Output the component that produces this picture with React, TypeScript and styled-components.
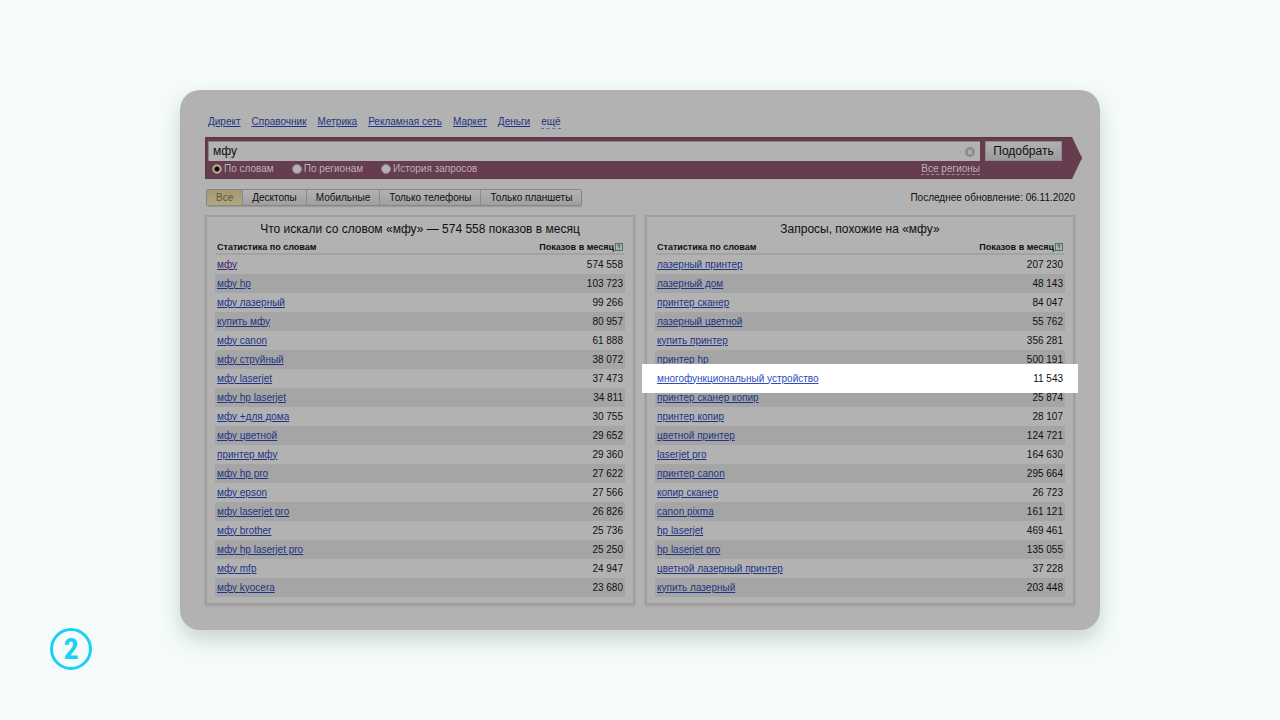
import React from "react";
import styled, { createGlobalStyle, css } from "styled-components";

const GlobalStyle = createGlobalStyle`
  *, *::before, *::after { box-sizing: border-box; }
  body {
    margin: 0;
    background: #f5fbfb;
    color: #101010;
    font-family: "Liberation Sans", Arial, sans-serif;
    font-size: 10px;
    line-height: 12px;
  }
  button, input { font-family: inherit; }
`;

const Slide = styled.div`
  display: grid;
  grid-template-columns: 180px minmax(0, 1fr) 180px;
  align-items: start;
  min-height: 100vh;
  padding: 90px 0 50px;
`;

const SlideNumber = styled.div`
  align-self: end;
  display: flex;
  align-items: center;
  justify-content: center;
  width: 42px;
  height: 42px;
  margin-left: 50px;
  border: 3px solid #19d1f3;
  border-radius: 50%;
  color: #19d1f3;
  font-family: "Roboto Condensed", "Open Sans Condensed", Roboto, sans-serif;
  font-size: 30px;
  line-height: 36px;
  font-weight: 700;
`;

const Card = styled.main`
  margin-bottom: 40px;
  padding: 26px 25px 25px;
  border-radius: 20px;
  background: #b2b2b2;
  box-shadow: 0 10px 20px rgba(30, 50, 50, 0.2);
`;

const Services = styled.nav`
  display: flex;
  gap: 11px;
  height: 21px;
  padding-left: 3px;
`;

const Link = styled.a<{ $visited?: boolean; $dashed?: boolean }>`
  color: ${(p) => (p.$visited ? "#44246a" : "#1f3484")};
  text-decoration: underline;
  text-underline-offset: 1px;
  ${(p) =>
    p.$dashed &&
    css`
      align-self: flex-start;
      border-bottom: 1px dashed #5f6c9a;
      text-decoration: none;
    `}
`;

const SearchBar = styled.form`
  display: grid;
  grid-template-columns: minmax(0, 1fr) 77px;
  column-gap: 5px;
  margin-right: -7px;
  padding: 3px 19px 1px 2px;
  border: 1px solid #5b3448;
  background: #663c4f;
  clip-path: polygon(0 0, calc(100% - 10px) 0, 100% 50%, calc(100% - 10px) 100%, 0 100%);
`;

const Field = styled.div`
  display: flex;
  align-items: center;
  height: 20px;
  padding: 0 5px 0 4px;
  border-top: 1px solid #858585;
  border-left: 1px solid #858585;
  background: #b2b2b2;
`;

const SearchInput = styled.input`
  flex: 1;
  min-width: 0;
  height: 18px;
  padding: 0 0 1px;
  border: 0;
  outline: 0;
  background: transparent;
  color: #101010;
  font-size: 12px;
  line-height: 16px;
`;

const ClearButton = styled.button`
  display: flex;
  padding: 0;
  border: 0;
  background: none;
`;

const SubmitButton = styled.button`
  height: 20px;
  padding: 0;
  border: 1px solid #8c8c8c;
  background: linear-gradient(#b2b2b2, #9b9b9b);
  color: #101010;
  font-size: 12px;
  line-height: 18px;
`;

const Options = styled.div`
  display: flex;
  align-items: center;
  height: 16px;
  padding-left: 4px;
  color: #b9b2b5;
`;

const Option = styled.label`
  display: flex;
  align-items: center;
  gap: 2px;
  margin-right: 18px;
`;

const Radio = styled.input`
  appearance: none;
  width: 10px;
  height: 10px;
  margin: 0;
  border: 1px solid #8d858a;
  border-radius: 50%;
  background: #b2b2b2;
  &:checked {
    border-color: #9c9272;
    background: radial-gradient(#050505 0 2px, #b8ad8a 3px);
  }
`;

const RegionLink = styled.a`
  margin-left: auto;
  border-bottom: 1px dashed #a0929a;
  color: #b9b2b5;
  line-height: 11px;
  text-decoration: none;
`;

const Toolbar = styled.div`
  display: flex;
  align-items: center;
  justify-content: space-between;
  margin-top: 10px;
  padding-left: 1px;
`;

const Tabs = styled.div`
  display: flex;
  border: 1px solid #868686;
  border-radius: 2px;
  box-shadow: 0 1px 1px #999999;
`;

const Tab = styled.button<{ $active?: boolean }>`
  height: 15px;
  padding: 0 9px;
  border: 0;
  border-right: 1px solid #8a8a8a;
  background: ${(p) => (p.$active ? "linear-gradient(#a49873, #b2a780)" : "linear-gradient(#b2b2b2, #a0a0a0)")};
  color: ${(p) => (p.$active ? "#5d563f" : "#101010")};
  font-size: 10px;
  line-height: 14px;
  &:last-child { border-right: 0; }
`;

const Panels = styled.div`
  display: grid;
  grid-template-columns: minmax(0, 1fr) minmax(0, 1fr);
  gap: 10px;
  margin-top: 9px;
`;

const Panel = styled.section`
  padding: 5px 8px 6px;
  border: 2px solid #9f9f9f;
  box-shadow: 0 1px 2px #9c9c9c;
`;

const PanelTitle = styled.h2`
  margin: 0;
  font-size: 12px;
  font-weight: 400;
  line-height: 14px;
  text-align: center;
`;

const Table = styled.table`
  width: 100%;
  border-collapse: separate;
  border-spacing: 0;
`;

const HeadCell = styled.th<{ $right?: boolean }>`
  height: 19px;
  padding: 6px 2px 0;
  border-bottom: 2px solid #a3a3a3;
  font-size: 9px;
  line-height: 11px;
  text-align: ${(p) => (p.$right ? "right" : "left")};
  svg { margin-left: 1px; vertical-align: -1px; }
`;

const Cell = styled.td<{ $right?: boolean }>`
  height: 19px;
  padding: 0 2px;
  text-align: ${(p) => (p.$right ? "right" : "left")};
`;

const Row = styled.tr<{ $highlight?: boolean }>`
  &:nth-child(even) { background: #a5a5a5; }
  ${(p) =>
    p.$highlight &&
    css`
      position: relative;
      z-index: 1;
      ${Cell}:first-child::before {
        content: "";
        position: absolute;
        z-index: -1;
        inset: -5px -13px;
        background: #ffffff;
      }
      ${Link} { color: #2d4cc0; }
    `}
`;

const HelpIcon = () => (
  <svg width="8" height="8" viewBox="0 0 8 8" aria-hidden="true">
    <rect x="0.5" y="0.5" width="7" height="7" fill="none" stroke="#4c7259" />
    <path d="M2.5 3V2.5Q4 1 5.3 2.5Q5.3 3.2 4 4V5M4 5.8V6.5" fill="none" stroke="#305b3e" />
  </svg>
);

const ClearIcon = () => (
  <svg width="10" height="10" viewBox="0 0 10 10" aria-hidden="true">
    <circle cx="5" cy="5" r="5" fill="#8b8b8b" />
    <path d="M3 3L7 7M7 3L3 7" stroke="#b8b8b8" strokeWidth="1.5" />
  </svg>
);

type Entry = [string, string];

const wordQueries: Entry[] = [
  ["мфу", "574 558"],
  ["мфу hp", "103 723"],
  ["мфу лазерный", "99 266"],
  ["купить мфу", "80 957"],
  ["мфу canon", "61 888"],
  ["мфу струйный", "38 072"],
  ["мфу laserjet", "37 473"],
  ["мфу hp laserjet", "34 811"],
  ["мфу +для дома", "30 755"],
  ["мфу цветной", "29 652"],
  ["принтер мфу", "29 360"],
  ["мфу hp pro", "27 622"],
  ["мфу epson", "27 566"],
  ["мфу laserjet pro", "26 826"],
  ["мфу brother", "25 736"],
  ["мфу hp laserjet pro", "25 250"],
  ["мфу mfp", "24 947"],
  ["мфу kyocera", "23 680"],
];

const similarQueries: Entry[] = [
  ["лазерный принтер", "207 230"],
  ["лазерный дом", "48 143"],
  ["принтер сканер", "84 047"],
  ["лазерный цветной", "55 762"],
  ["купить принтер", "356 281"],
  ["принтер hp", "500 191"],
  ["многофункциональный устройство", "11 543"],
  ["принтер сканер копир", "25 874"],
  ["принтер копир", "28 107"],
  ["цветной принтер", "124 721"],
  ["laserjet pro", "164 630"],
  ["принтер canon", "295 664"],
  ["копир сканер", "26 723"],
  ["canon pixma", "161 121"],
  ["hp laserjet", "469 461"],
  ["hp laserjet pro", "135 055"],
  ["цветной лазерный принтер", "37 228"],
  ["купить лазерный", "203 448"],
];

const services = ["Директ", "Справочник", "Метрика", "Рекламная сеть", "Маркет", "Деньги"];
const modes = ["По словам", "По регионам", "История запросов"];
const devices = ["Все", "Десктопы", "Мобильные", "Только телефоны", "Только планшеты"];

interface QueryPanelProps {
  title: string;
  rows: Entry[];
  visited?: string;
  highlighted?: string;
}

const QueryPanel = ({ title, rows, visited, highlighted }: QueryPanelProps) => (
  <Panel>
    <PanelTitle>{title}</PanelTitle>
    <Table>
      <thead>
        <tr>
          <HeadCell scope="col">Статистика по словам</HeadCell>
          <HeadCell scope="col" $right>
            Показов в месяц
            <HelpIcon />
          </HeadCell>
        </tr>
      </thead>
      <tbody>
        {rows.map(([query, shows]) => (
          <Row key={query} $highlight={query === highlighted}>
            <Cell>
              <Link href="#" $visited={query === visited}>{query}</Link>
            </Cell>
            <Cell $right>{shows}</Cell>
          </Row>
        ))}
      </tbody>
    </Table>
  </Panel>
);

export default function App() {
  return (
    <>
      <GlobalStyle />
      <Slide>
        <SlideNumber>2</SlideNumber>
        <Card>
          <Services>
            {services.map((name) => (
              <Link key={name} href="#">{name}</Link>
            ))}
            <Link href="#" $dashed>ещё</Link>
          </Services>
          <SearchBar onSubmit={(e) => e.preventDefault()}>
            <Field>
              <SearchInput type="text" aria-label="Запрос" defaultValue="мфу" />
              <ClearButton type="reset" aria-label="Очистить">
                <ClearIcon />
              </ClearButton>
            </Field>
            <SubmitButton type="submit">Подобрать</SubmitButton>
            <Options>
              {modes.map((mode, i) => (
                <Option key={mode}>
                  <Radio type="radio" name="mode" defaultChecked={i === 0} />
                  {mode}
                </Option>
              ))}
              <RegionLink href="#">Все регионы</RegionLink>
            </Options>
          </SearchBar>
          <Toolbar>
            <Tabs>
              {devices.map((name, i) => (
                <Tab key={name} type="button" $active={i === 0}>{name}</Tab>
              ))}
            </Tabs>
            <span>Последнее обновление: 06.11.2020</span>
          </Toolbar>
          <Panels>
            <QueryPanel
              title="Что искали со словом «мфу» — 574 558 показов в месяц"
              rows={wordQueries}
              visited="мфу"
            />
            <QueryPanel
              title="Запросы, похожие на «мфу»"
              rows={similarQueries}
              highlighted="многофункциональный устройство"
            />
          </Panels>
        </Card>
      </Slide>
    </>
  );
}
